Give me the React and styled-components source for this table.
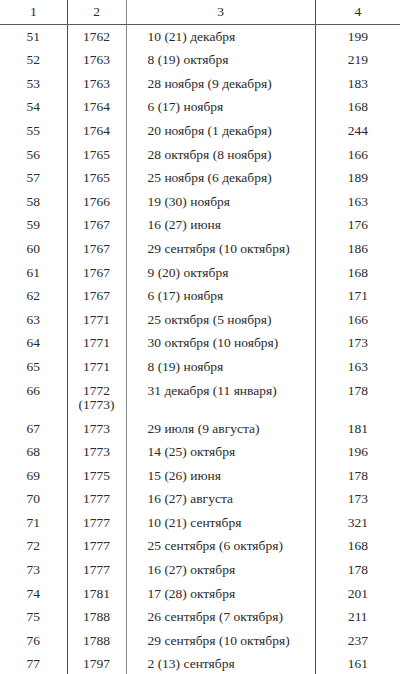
import React from 'react';
import styled, { createGlobalStyle } from 'styled-components';

const serif = `"Liberation Serif", "DejaVu Serif", serif`;

const GlobalStyle = createGlobalStyle`
  html, body {
    margin: 0;
    padding: 0;
    background: #fff;
    overflow: hidden;
  }
  body {
    font-family: ${serif};
    color: #2a2a2a;
  }
`;

const Page = styled.div`
  width: 400px;
  height: 674px;
  overflow: hidden;
  font-family: ${serif};
`;

const Table = styled.table`
  width: 400px;
  border-collapse: collapse;
  table-layout: fixed;
  font-family: ${serif};
  font-size: 13.5px;
  color: #2a2a2a;
`;

const Col = styled.col`
  width: ${(p) => p.$w}px;
`;

const Head = styled.th`
  height: 24px;
  padding: 0;
  font-family: ${serif};
  font-weight: normal;
  font-size: 13.5px;
  text-align: center;
  vertical-align: middle;
  border-bottom: 1.2px solid #5a5a5a;
  border-left: ${(p) => (p.$first ? 'none' : p.$soft ? '1.6px solid #8a8a8a' : '1.2px solid #4a4a4a')};
`;

const Cell = styled.td`
  padding: 4.6px 0 4.6px ${(p) => (p.$left ? '21px' : '0')};
  font-family: ${serif};
  font-size: 13.5px;
  line-height: 14.4px;
  vertical-align: top;
  text-align: ${(p) => (p.$left ? 'left' : 'center')};
  white-space: nowrap;
  border-left: ${(p) => (p.$first ? 'none' : p.$soft ? '1.6px solid #8a8a8a' : '1.2px solid #4a4a4a')};
`;

const rows = [
  ['51', '1762', '10 (21) декабря', '199'],
  ['52', '1763', '8 (19) октября', '219'],
  ['53', '1763', '28 ноября (9 декабря)', '183'],
  ['54', '1764', '6 (17) ноября', '168'],
  ['55', '1764', '20 ноября (1 декабря)', '244'],
  ['56', '1765', '28 октября (8 ноября)', '166'],
  ['57', '1765', '25 ноября (6 декабря)', '189'],
  ['58', '1766', '19 (30) ноября', '163'],
  ['59', '1767', '16 (27) июня', '176'],
  ['60', '1767', '29 сентября (10 октября)', '186'],
  ['61', '1767', '9 (20) октября', '168'],
  ['62', '1767', '6 (17) ноября', '171'],
  ['63', '1771', '25 октября (5 ноября)', '166'],
  ['64', '1771', '30 октября (10 ноября)', '173'],
  ['65', '1771', '8 (19) ноября', '163'],
  ['66', ['1772', '(1773)'], '31 декабря (11 января)', '178'],
  ['67', '1773', '29 июля (9 августа)', '181'],
  ['68', '1773', '14 (25) октября', '196'],
  ['69', '1775', '15 (26) июня', '178'],
  ['70', '1777', '16 (27) августа', '173'],
  ['71', '1777', '10 (21) сентября', '321'],
  ['72', '1777', '25 сентября (6 октября)', '168'],
  ['73', '1777', '16 (27) октября', '178'],
  ['74', '1781', '17 (28) октября', '201'],
  ['75', '1788', '26 сентября (7 октября)', '211'],
  ['76', '1788', '29 сентября (10 октября)', '237'],
  ['77', '1797', '2 (13) сентября', '161'],
];

const App = () => (
  <Page>
    <GlobalStyle />
    <Table>
      <colgroup>
        <Col $w={67} />
        <Col $w={59} />
        <Col $w={189} />
        <Col $w={85} />
      </colgroup>
      <thead>
        <tr>
          <Head $first>1</Head>
          <Head>2</Head>
          <Head $soft>3</Head>
          <Head>4</Head>
        </tr>
      </thead>
      <tbody>
        {rows.map(([n, year, date, count]) => (
          <tr key={n}>
            <Cell $first>{n}</Cell>
            <Cell>
              {Array.isArray(year)
                ? year.map((y, i) => (
                    <React.Fragment key={y}>
                      {i > 0 && <br />}
                      {y}
                    </React.Fragment>
                  ))
                : year}
            </Cell>
            <Cell $soft $left>{date}</Cell>
            <Cell>{count}</Cell>
          </tr>
        ))}
      </tbody>
    </Table>
  </Page>
);

export default App;
